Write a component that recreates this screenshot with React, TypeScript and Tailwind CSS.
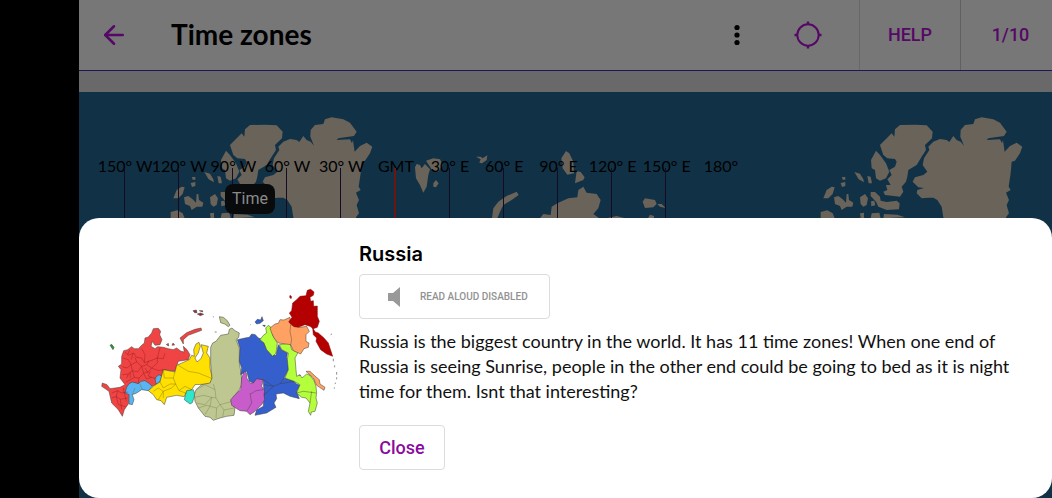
import { ArrowLeft } from 'lucide-react';

const meridians = [
  '150° W',
  '120° W',
  '90° W',
  '60° W',
  '30° W',
  'GMT',
  '30° E',
  '60° E',
  '90° E',
  '120° E',
  '150° E',
  '180°',
];

const NorthAtlantic = () => (
  <g transform="translate(71 -2) scale(0.3333)">
    {/* Greenland */}
    <path d="M430 382 425 350 412 330 400 323 385 323 365 325 350 310 352 300 372 294 355 292 338 275 345 262 370 255 382 245 368 225 372 205 388 180 385 170 400 155 420 147 440 150 448 156 460 138 470 150 482 155 492 167 481 140 482 120 495 105 520 102 525 88 545 82 580 88 600 98 620 125 612 138 565 145 560 150 600 148 606 160 609 150 614 185 630 168 650 158 667 170 660 190 645 212 635 215 632 250 626 290 632 300 618 308 627 330 620 345 627 370 618 382 630 700 500 800z" />
    {/* Ellesmere */}
    <path d="M240 165 255 150 275 130 283 140 285 118 300 105 345 104 380 106 398 125 396 145 375 165 378 180 365 200 350 225 325 240 322 260 318 275 305 290 310 305 300 320 255 315 250 305 262 300 258 285 272 285 262 268 275 255 268 240 285 230 290 215 285 207 262 205 250 195z" />
    <path d="M213 210 228 182 240 195 258 220 268 245 258 265 240 272 228 265 225 240 215 235z" />
    {/* Arctic archipelago */}
    <path d="M163 246 180 251 190 268 192 277 176 268zM202 258l10 2 4 20-10 0zM126 261l10 0 0 8-8 0zM122 279l14-3 0 12-10 3zM70 325 80 300 95 290 104 292 98 312 85 325zM102 322 115 318 128 328 138 338 140 312 145 312 147 330 160 338 157 350 140 350 125 360 120 348 105 342zM180 322 195 312 204 325 200 345 190 350 182 342zM212 306 225 306 240 320 242 332 260 336 290 332 299 340 297 358 260 360 235 350 228 335 212 318zM213 334l10-2 3 14-12 3zM62 366 82 361 98 370 104 385 62 385zM182 385 180 370 192 368 192 385zM212 385 215 370 238 368 242 385zM250 385 252 372 292 374 315 382z" />
  </g>
);

const WorldMap = () => (
  <svg
    className="absolute left-0 top-0 h-[406px] w-full"
    viewBox="0 0 973 406"
    preserveAspectRatio="xMinYMin slice"
    fill="#69635a"
    aria-hidden="true"
  >
    <NorthAtlantic />
    <g transform="translate(650 0)">
      <NorthAtlantic />
    </g>
    {/* Svalbard */}
    <g transform="translate(181 -2) scale(0.3333)">
      <path d="M465 232 470 222 480 225 485 235 495 222 510 238 505 255 500 290 490 308 480 285 468 265zM498 212 520 205 540 208 548 225 535 245 515 238zM520 280 528 270 536 280 528 292 520 290z" />
    </g>
    {/* Russian Arctic islands */}
    <g transform="translate(361 -2) scale(0.3333)">
      <path d="M108 200 122 200 128 205 142 196 140 210 126 220 118 218 122 208zM378 183 388 190 400 215 402 250 382 254 368 235 364 205zM410 243 422 246 434 262 430 270 405 280zM156 385 160 355 175 335 200 318 230 305 236 315 215 330 190 345 180 365 172 385zM300 385 310 372 332 375 335 350 352 340 385 325 412 322 415 300 430 290 440 308 470 312 482 330 475 355 460 372 478 385zM608 335 615 325 645 330 650 342 640 352 615 354zM652 342 665 342 677 354 660 350zM624 385 630 374 642 378 642 385zM500 385 530 378 556 385z" />
    </g>
  </svg>
);

const RussiaMap = () => (
  <svg
    className="h-[156px] w-[250px] shrink-0"
    viewBox="0 0 250 156"
    role="img"
    aria-label="Map of the time zones of Russia"
  >
    <g transform="scale(0.3333)" stroke="#3b3b30" strokeWidth="1.5" strokeLinejoin="round">
      <path fill="#f04444" d="M80 235 86 218 98 215 110 206 118 212 130 212 140 202 148 195 150 180 160 177 170 165 175 152 190 151 197 160 194 170 201 185 195 200 180 202 172 190 168 205 180 212 188 206 205 208 220 212 235 215 245 210 258 220 268 222 265 205 276 215 285 230 280 245 250 250 240 280 205 275 200 295 185 300 185 318 170 325 150 310 130 317 110 314 95 335 102 345 100 378 88 395 82 415 70 395 50 375 42 340 20 325 22 315 36 320 45 332 75 328 90 320 75 300 78 275 70 265 80 258z" />
      <path fill="#58b4f5" d="M95 328 102 317 112 312 130 317 138 310 150 308 162 316 172 325 160 338 140 335 125 345 112 350 117 365 112 380 102 378 103 350 90 345zM180 300 192 290 200 295 195 312 183 318z" />
      <path fill="#ffe000" d="M205 275 240 282 245 262 283 245 290 232 298 235 296 215 303 198 312 193 316 205 310 225 300 240 306 252 318 242 325 225 318 200 340 205 335 225 345 240 345 270 352 300 345 318 300 320 290 335 272 345 268 356 245 352 215 358 208 380 198 368 185 365 175 350 160 338 175 325 195 312z" />
      <path fill="#2de8cb" d="M275 338 295 335 300 350 292 374 285 378 268 365z" />
      <path fill="#f04444" d="M265 198 255 180 275 164 300 154 318 150 320 157 280 172 265 185zM214 200l6-4 1 8zM234 195l5 6-8 1z" />
      <path fill="#9d2745" d="M294 98l10-2 2 8-7 0zM307 108l10-3 9 4-10 4zM313 98l10 0 0 4z" />
      <path fill="#229b28" d="M45 202 50 199 57 208 54 215z" />
      {/* inner borders, western regions */}
      <path fill="none" stroke="#8b1717" strokeWidth="1.2" d="M90 222 100 232 116 225 125 238 140 240 148 254 168 248 187 240 205 242 210 226M83 240 100 245 108 260 125 252 140 265 155 260 170 270 187 255 187 240M82 266 96 270 108 260 112 278 128 282 140 265 146 286 162 280 170 270 190 278 205 275M82 290 100 288 112 278 118 298 132 300 146 286 155 303 170 298 184 302M95 300 100 288M92 313 108 304 118 298M132 300 130 317M125 252 120 238M166 280 160 294 170 298M162 248 155 260M140 212 150 230 148 254M187 240 195 210M50 345 68 338 78 345 100 342M50 360 64 356 76 364 98 360M68 338 64 356 70 380 92 386M76 364 80 395M85 330 88 345 94 370M98 230 104 216M108 245 115 225M150 270 160 286M105 282 106 300" />
      <path fill="none" stroke="#796a00" strokeWidth="1.2" d="M240 282 235 300 242 318 230 330 205 340 205 360M250 262 280 280 310 285 352 302M205 275 208 300 235 300M195 312 205 330 225 318 242 318 252 338 272 345M175 340 190 330 205 340 190 365M135 317 142 335M120 330 112 350M252 338 270 325 290 335" />
    </g>
    <g transform="translate(105 0) scale(0.3333)" stroke="#3b3b30" strokeWidth="1.5" strokeLinejoin="round">
      <path fill="#bfc791" d="M32 208 38 195 48 190 62 172 85 168 88 154 96 150 105 158 118 165 116 178 108 185 118 210 118 255 124 290 125 320 118 335 92 370 105 390 102 412 80 415 60 420 40 427 30 418 15 415 -5 390 -15 370 -17 350 -12 335 5 320 30 315 36 300 32 255zM58 116 70 118 82 128 90 142 85 146 74 138 62 134z" />
      <path fill="#365fce" d="M112 185 135 180 148 178 155 168 166 170 175 180 190 185 200 210 215 230 228 232 235 200 245 215 262 225 260 240 266 250 265 275 252 300 280 308 290 318 300 322 290 340 298 362 270 355 250 345 228 348 230 362 222 375 228 388 200 405 165 412 170 396 190 385 192 350 190 305 160 315 148 310 140 280 122 290 125 270 118 250 120 210zM165 132 172 124 182 126 186 116 190 128 180 136 170 138zM188 142l8 0-2 4z" />
      <path fill="#c95ccb" d="M133 280 139 285 140 300 150 315 160 315 170 302 190 306 185 325 194 338 192 350 194 365 185 380 165 400 150 410 140 400 120 398 95 382 92 365 105 350 122 335 125 300z" />
      <path fill="#b4ff3b" d="M180 185 190 172 200 165 197 150 205 142 215 150 218 172 232 195 228 225 218 235 200 215 192 195zM238 200 270 195 275 215 295 222 285 240 288 275 290 295 300 290 306 300 320 288 330 292 342 308 348 325 350 345 348 360 352 375 345 400 334 402 332 412 325 400 330 375 318 360 305 358 290 345 300 320 282 310 255 300 265 275 262 245 265 225 245 215z" />
      <path fill="#ffa163" d="M210 150 225 138 235 136 240 125 252 126 270 118 272 140 300 148 320 145 328 160 318 170 318 190 327 195 325 208 312 212 302 228 280 218 272 200 235 195 222 180 215 165zM318 280 330 280 345 294 358 305 360 318 375 328 372 337 350 322 340 300z" />
      <path fill="#b40000" stroke="#810000" d="M268 105 275 98 278 75 290 65 300 55 318 53 322 37 332 34 342 42 340 52 330 58 332 70 340 68 341 85 352 84 352 115 358 130 352 148 340 152 330 145 315 140 295 148 282 146 266 132 276 118zM338 150 346 162 355 165 372 180 385 195 398 235 380 228 362 215 348 190 350 180 340 170zM270 52l5 4-2 6-4-4z" />
      <path fill="none" stroke="#70784d" strokeWidth="1.2" d="M-10 335 15 320 45 335 48 360 35 358 10 352 -15 358M-10 375 15 380 35 358 30 385 15 410M-5 390 20 382 50 390 48 420M48 360 60 380 50 390M60 380 90 372M60 380 72 396 102 390M45 335 40 318M72 396 68 416" />
      <path fill="none" strokeWidth="1.2" d="M150 345 155 375 140 400M152 348 168 338 190 335M192 320 220 325 238 318 282 310M190 305 210 318 220 325 205 340 192 350M272 140 270 160 275 185 272 200M290 345 310 340 348 345M252 300 240 318M335 340 330 375" />
      <path fill="none" stroke="#555" strokeWidth="2" d="M400 242v8M404 262v6M410 282v8M410 298v6M406 314v4M403 328v4M392 170l4-2M44 162h6M40 115v3M150 140h2M296 292l6 0" />
    </g>
  </svg>
);

const Header = () => (
  <header className="flex h-[71px] items-stretch border-b border-[#22145c] bg-[#777777] text-[#560866]">
    <button type="button" aria-label="Back" className="pl-5 pr-[42px]">
      <ArrowLeft size={30} strokeWidth={2} />
    </button>
    <h1 className="flex flex-1 items-center pb-0.5 font-['Lato',sans-serif] text-[28px] font-bold text-black">
      Time zones
    </h1>
    <button type="button" aria-label="More options" className="px-4">
      <svg width="8" height="24" viewBox="0 0 8 24" fill="#000">
        <circle cx="4" cy="4.5" r="2.6" />
        <circle cx="4" cy="12" r="2.6" />
        <circle cx="4" cy="19.5" r="2.6" />
      </svg>
    </button>
    <button type="button" aria-label="Locate" className="px-9">
      <svg width="30" height="30" viewBox="0 0 30 30" fill="none" stroke="currentColor">
        <circle cx="15" cy="15" r="10.7" strokeWidth="2" />
        <path d="M15 1.500V5M15 25v3.500M1.500 15H5M25 15h3.500" strokeWidth="2.4" />
      </svg>
    </button>
    <button
      type="button"
      className="w-[101px] border-l border-[#686868] font-['Roboto',sans-serif] text-lg font-medium"
    >
      HELP
    </button>
    <div className="flex w-[92px] items-center justify-center border-l border-[#606060] pl-2 font-['Roboto',sans-serif] text-lg font-medium">
      1/10
    </div>
  </header>
);

const Meridians = () => (
  <ol className="relative ml-[18px] grid w-[650px] grid-cols-12 pt-16 font-['Lato',sans-serif] text-base leading-5 text-black">
    {meridians.map((label) => (
      <li key={label} className="flex flex-col items-center">
        <span className="h-3 whitespace-nowrap pl-0.5">{label}</span>
        {label === 'GMT' ? (
          <span className="h-[330px] w-0.5 bg-[#6b170f]" />
        ) : (
          label !== '180°' && <span className="h-[330px] w-px bg-[#150c24]" />
        )}
      </li>
    ))}
  </ol>
);

const InfoSheet = () => (
  <section
    role="dialog"
    aria-labelledby="sheet-title"
    className="absolute inset-x-0 bottom-0 flex items-center gap-3.5 rounded-[20px] bg-white pb-7 pl-4 pr-8 pt-6"
  >
    <RussiaMap />
    <div className="flex min-w-0 flex-1 flex-col items-start text-[#111111]">
      <h2
        id="sheet-title"
        className="font-['Inter',sans-serif] text-xl leading-6 font-semibold text-black"
      >
        Russia
      </h2>
      <button
        type="button"
        disabled
        className="mt-2 flex h-[45px] w-[191px] items-center rounded border border-[#dcdcdc] pl-7 font-['Roboto',sans-serif] text-[10px] font-medium text-[#929292]"
      >
        <svg className="mr-5" width="12" height="20" viewBox="0 0 12 20" fill="#999">
          <path d="M0 6h5l7-6v20l-7-6H0z" />
        </svg>
        READ ALOUD DISABLED
      </button>
      <p className="mt-2.5 font-['Lato',sans-serif] text-[18px] leading-[25px]">
        Russia is the biggest country in the world. It has 11 time zones! When one end of Russia is
        seeing Sunrise, people in the other end could be going to bed as it is night time for them.
        Isnt that interesting?
      </p>
      <button
        type="button"
        className="mt-[21px] h-[45px] w-[86px] rounded border border-[#dcdcdc] font-['Roboto',sans-serif] text-lg font-medium text-[#8a0aa0]"
      >
        Close
      </button>
    </div>
  </section>
);

const App = () => {
  return (
    <div className="flex h-screen overflow-hidden bg-black">
      <div className="w-[79px] shrink-0" />
      <main className="relative flex min-w-0 flex-1 flex-col">
        <Header />
        <div className="h-[21px] shrink-0 bg-[#696969]" />
        <div className="relative min-h-0 flex-1 overflow-hidden bg-[#113246]">
          <WorldMap />
          <Meridians />
          <div className="absolute left-[146px] top-[92px] rounded-lg bg-[#090a0c] px-[7px] py-1 font-['Roboto',sans-serif] text-base leading-[22px] text-[#8a8a8a]">
            Time
          </div>
        </div>
        <InfoSheet />
      </main>
    </div>
  );
};

export default App;
